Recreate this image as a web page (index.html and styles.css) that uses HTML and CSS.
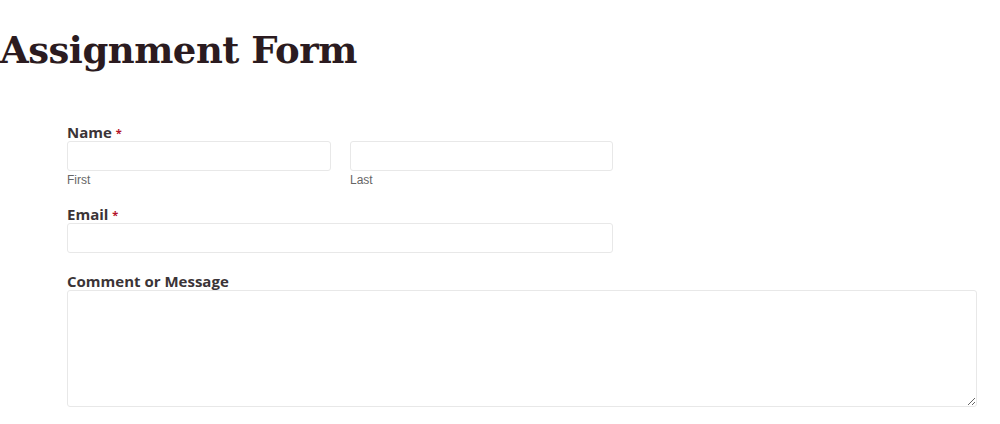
FILE: index.html
```html
<!DOCTYPE html>
<html>
<head>
<meta charset="utf-8">
<link rel="stylesheet" href="styles.css">
</head>
<body>
<h1 class="title">Assignment Form</h1>
<form class="form">
  <div class="field field-name">
    <div class="label">Name <span class="req">*</span></div>
    <div class="name-row">
      <div class="sub">
        <input class="input" type="text">
        <div class="sublabel">First</div>
      </div>
      <div class="sub">
        <input class="input" type="text">
        <div class="sublabel">Last</div>
      </div>
    </div>
  </div>
  <div class="field field-email">
    <div class="label">Email <span class="req">*</span></div>
    <input class="input email" type="text">
  </div>
  <div class="field">
    <div class="label">Comment or Message</div>
    <textarea class="textarea"></textarea>
  </div>
</form>
</body>
</html>
```
FILE: styles.css
```css
html, body { margin: 0; padding: 0; background: #fff; }
body { font-family: "Liberation Sans", Arial, sans-serif; }
.title {
  margin: 0;
  padding: 24px 0 0 0;
  font-family: "DejaVu Serif", serif;
  font-weight: bold;
  font-size: 37px;
  line-height: 52px;
  color: #2b1b20;
  letter-spacing: -0.5px;
}
.form {
  margin: 0 23px 0 67px;
  padding-top: 48px;
}
.field-name { margin-bottom: 18px; }
.field-email { margin-bottom: 20px; }
.label {
  font-family: "Open Sans", sans-serif;
  font-weight: 700;
  font-size: 15px;
  line-height: 17px;
  color: #3b3437;
}
.req { color: #b4122a; font-size: 11px; vertical-align: top; }
.name-row {
  display: grid;
  grid-template-columns: 264px 263px;
  column-gap: 19px;
}
.input {
  display: block;
  box-sizing: border-box;
  width: 100%;
  height: 30px;
  border: 1px solid #e8e8e8;
  border-radius: 3px;
  background: #fff;
  margin: 0;
  padding: 4px 8px;
}
.email { width: 546px; }
.sublabel {
  font-family: "Liberation Sans", Arial, sans-serif;
  font-size: 12px;
  line-height: 16px;
  color: #666;
  margin-top: 1px;
}
.textarea {
  display: block;
  box-sizing: border-box;
  width: 100%;
  height: 117px;
  border: 1px solid #e8e8e8;
  border-radius: 3px;
  margin: 0;
  padding: 4px 8px;
  resize: vertical;
}
```
